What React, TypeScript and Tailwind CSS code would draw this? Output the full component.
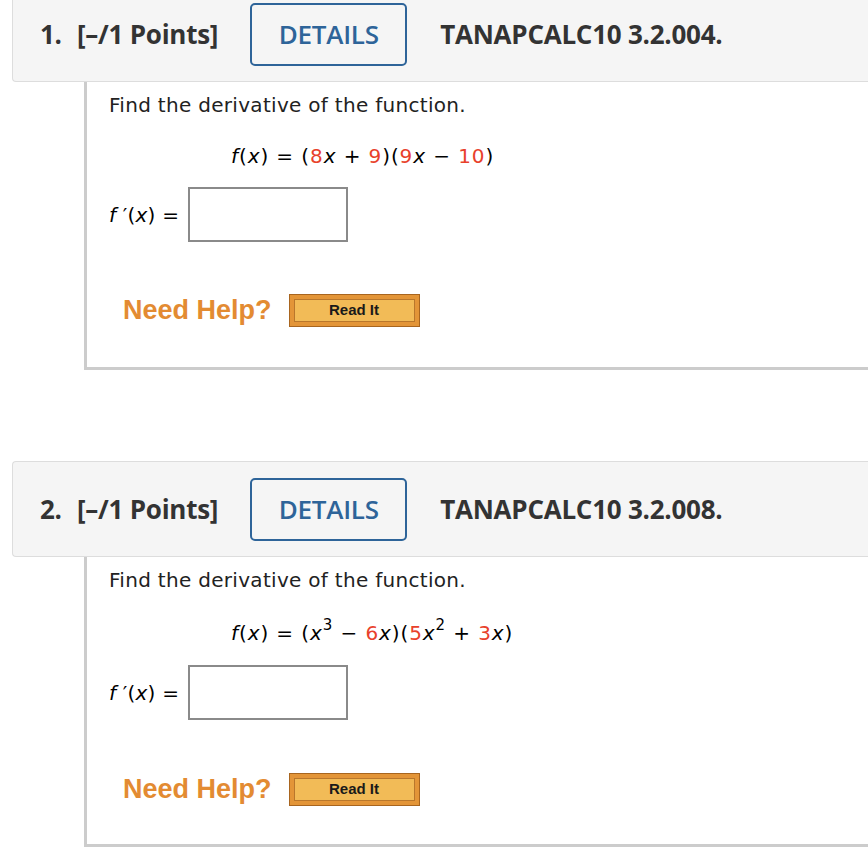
import React from "react";

type Part = { t: string; red?: boolean; it?: boolean; sup?: boolean };

const Expr = ({ parts }: { parts: Part[] }) => (
  <span>
    {parts.map((p, i) => {
      const color = p.red ? "text-[#e8412b]" : "text-black";
      if (p.sup) {
        return (
          <sup key={i} className={"text-[15px] relative -top-[10px] " + color}>
            {p.t}
          </sup>
        );
      }
      return (
        <span key={i} className={(p.it ? "italic " : "") + color}>
          {p.t}
        </span>
      );
    })}
  </span>
);

const Header = ({ num, code, first }: { num: string; code: string; first?: boolean }) => (
  <div
    className={
      "ml-[12px] h-[96px] bg-[#f5f5f5] border border-r-0 border-[#dddddd] rounded-l-[4px] flex items-center [font-family:'Open_Sans',sans-serif] text-[#333333] " +
      (first ? "-mt-[14px]" : "")
    }
  >
    <span className="ml-[27px] text-[26px] font-bold tracking-[-0.25px] w-[37px]">{num}</span>
    <span className="text-[26px] font-bold tracking-[-0.25px]">[–/1 Points]</span>
    <div className="ml-[32px] w-[157px] h-[63px] border-2 border-[#2e6499] rounded-[5px] flex items-center justify-center text-[#2e6499] text-[26px] font-semibold tracking-[-0.25px]">
      DETAILS
    </div>
    <span className="ml-[33px] text-[26px] font-bold tracking-[-0.25px]">{code}</span>
  </div>
);

// tall: the second question has superscripts, so its rows sit a few px lower
const Body = ({ expr, tall }: { expr: Part[]; tall?: boolean }) => (
  <div
    className={
      "ml-[84px] border-l-[3px] border-b-[3px] border-[#cccccc] pl-[22px] pt-[10px] bg-white [font-family:'DejaVu_Sans',sans-serif] " +
      (tall ? "h-[290px]" : "h-[288px]")
    }
  >
    <p className="text-[20px] tracking-[0.3px] leading-[26px] text-[#222222]">Find the derivative of the function.</p>
    <div className={"pl-[122px] text-[20px] tracking-[0.9px] leading-[28px] h-[28px] " + (tall ? "mt-[26px]" : "mt-[24px]")}>
      <span className="italic">f</span>(<span className="italic">x</span>) = <Expr parts={expr} />
    </div>
    <div className={"flex items-center text-[20px] tracking-[0.2px] " + (tall ? "mt-[18px]" : "mt-[17px]")}>
      <span className="w-[79px]">
        <span className="italic">f</span> ′(<span className="italic">x</span>) =
      </span>
      <div className="w-[160px] h-[55px] border-2 border-[#8a8a8a] bg-white" />
    </div>
    <div className={"ml-[14px] h-[33px] flex items-center " + (tall ? "mt-[53px]" : "mt-[52px]")}>
      <span className="[font-family:'Liberation_Sans',sans-serif] font-bold text-[27px] leading-none text-[#e38b32]">Need Help?</span>
      <div className="ml-[17px] w-[131px] h-[33px] border border-[#a8651f] bg-[#e39538] p-[4px]">
        <div className="h-full border border-[#b9772c] bg-[#f2bb57] flex items-center justify-center [font-family:'Liberation_Sans',sans-serif] font-bold text-[15px] text-[#1a1a1a]">
          Read It
        </div>
      </div>
    </div>
  </div>
);

export default function App() {
  return (
    <div className="w-[868px] h-[860px] overflow-hidden bg-white">
      <Header num="1." code="TANAPCALC10 3.2.004." first />
      <Body
        expr={[
          { t: "(" },
          { t: "8", red: true },
          { t: "x", it: true },
          { t: " + " },
          { t: "9", red: true },
          { t: ")(" },
          { t: "9", red: true },
          { t: "x", it: true },
          { t: " − " },
          { t: "10", red: true },
          { t: ")" },
        ]}
      />
      <div className="h-[91px]" />
      <Header num="2." code="TANAPCALC10 3.2.008." />
      <Body
        tall
        expr={[
          { t: "(" },
          { t: "x", it: true },
          { t: "3", sup: true },
          { t: " − " },
          { t: "6", red: true },
          { t: "x", it: true },
          { t: ")(" },
          { t: "5", red: true },
          { t: "x", it: true },
          { t: "2", sup: true },
          { t: " + " },
          { t: "3", red: true },
          { t: "x", it: true },
          { t: ")" },
        ]}
      />
    </div>
  );
}
